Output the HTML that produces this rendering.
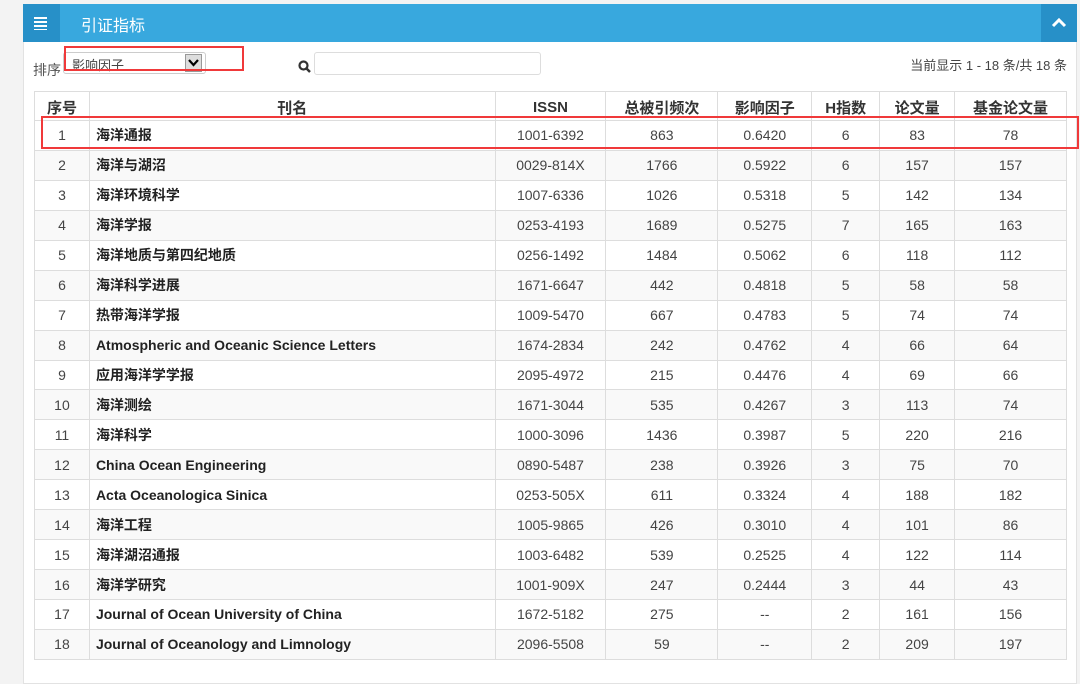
<!DOCTYPE html>
<html><head><meta charset="utf-8"><style>
*{margin:0;padding:0;box-sizing:border-box}
body{width:1080px;height:669px;background:#f3f3f3;font-family:"Liberation Sans","Noto Sans CJK SC",sans-serif;position:relative;overflow:hidden;color:#333}
.panel{position:absolute;left:23px;top:4px;width:1054px;height:680px;background:#fff;border:1px solid #e2e2e2}
.hd{position:absolute;left:23px;top:4px;width:1054px;height:38px;background:#38a8de}
.hd .l{position:absolute;left:0;top:0;width:37px;height:38px;background:#2790c8}
.hd .r{position:absolute;right:0;top:0;width:36px;height:38px;background:#2790c8}
.hd .t{position:absolute;left:58px;top:8px;color:#fff;font-size:16px}
.bar{position:absolute;left:11px;height:2px;width:13px;background:#fff}
.sel{position:absolute;left:63px;top:52px;width:143px;height:22px;border:1px solid #ccc;border-radius:3px;font-size:13px;padding:2px 8px;color:#444;background:#fff}
.sel .b{position:absolute;right:3px;top:1px;width:17px;height:18px;background:#ddd;border:1px solid #999}
table{position:absolute;left:34px;top:91px;width:1033px;border-collapse:collapse;font-size:14px}
td,th{border:1px solid #ddd;text-align:center;height:29.95px;padding:0}
th{height:29px;font-weight:bold;font-size:15px;padding-top:2px}
td:nth-child(2){text-align:left;padding-left:6px;font-weight:bold;color:#222}
td{color:#444}
tr:nth-child(odd) td{background:#f9f9f9}
.red{position:absolute;border:2px solid #f0393a}
</style></head><body>
<div class="panel"></div>
<div class="hd"><div class="l"><div class="bar" style="top:13px"></div><div class="bar" style="top:17px"></div><div class="bar" style="top:21px"></div><div class="bar" style="top:25px;height:1px"></div></div>
<div class="t">引证指标</div>
<div class="r"><svg width="36" height="38"><path d="M12 22 L18 16 L24 22" stroke="#fff" stroke-width="3" fill="none"/></svg></div></div>
<div style="position:absolute;left:33px;top:60px;font-size:14px;color:#555">排序</div>
<div class="sel">影响因子<div class="b"><svg width="15" height="16"><path d="M3 5 L7.5 10 L12 5" stroke="#000" stroke-width="2.2" fill="none"/></svg></div></div>
<div class="red" style="left:64px;top:46px;width:180px;height:25px"></div>
<svg style="position:absolute;left:298px;top:60px" width="14" height="14"><circle cx="5.5" cy="5.5" r="4" stroke="#333" stroke-width="2.2" fill="none"/><path d="M8.5 8.5 L12 12" stroke="#333" stroke-width="2.5"/></svg>
<div style="position:absolute;left:314px;top:52px;width:227px;height:23px;border:1px solid #ddd;border-radius:3px"></div>
<div style="position:absolute;right:13px;top:55px;font-size:13px;color:#444">当前显示 1 - 18 条/共 18 条</div>
<table>
<colgroup><col style="width:55px"><col style="width:406px"><col style="width:111px"><col style="width:112px"><col style="width:94px"><col style="width:68px"><col style="width:75px"><col style="width:112px"></colgroup>
<tr><th>序号</th><th>刊名</th><th>ISSN</th><th>总被引频次</th><th>影响因子</th><th>H指数</th><th>论文量</th><th>基金论文量</th></tr>
<tr><td>1</td><td>海洋通报</td><td>1001-6392</td><td>863</td><td>0.6420</td><td>6</td><td>83</td><td>78</td></tr>
<tr><td>2</td><td>海洋与湖沼</td><td>0029-814X</td><td>1766</td><td>0.5922</td><td>6</td><td>157</td><td>157</td></tr>
<tr><td>3</td><td>海洋环境科学</td><td>1007-6336</td><td>1026</td><td>0.5318</td><td>5</td><td>142</td><td>134</td></tr>
<tr><td>4</td><td>海洋学报</td><td>0253-4193</td><td>1689</td><td>0.5275</td><td>7</td><td>165</td><td>163</td></tr>
<tr><td>5</td><td>海洋地质与第四纪地质</td><td>0256-1492</td><td>1484</td><td>0.5062</td><td>6</td><td>118</td><td>112</td></tr>
<tr><td>6</td><td>海洋科学进展</td><td>1671-6647</td><td>442</td><td>0.4818</td><td>5</td><td>58</td><td>58</td></tr>
<tr><td>7</td><td>热带海洋学报</td><td>1009-5470</td><td>667</td><td>0.4783</td><td>5</td><td>74</td><td>74</td></tr>
<tr><td>8</td><td>Atmospheric and Oceanic Science Letters</td><td>1674-2834</td><td>242</td><td>0.4762</td><td>4</td><td>66</td><td>64</td></tr>
<tr><td>9</td><td>应用海洋学学报</td><td>2095-4972</td><td>215</td><td>0.4476</td><td>4</td><td>69</td><td>66</td></tr>
<tr><td>10</td><td>海洋测绘</td><td>1671-3044</td><td>535</td><td>0.4267</td><td>3</td><td>113</td><td>74</td></tr>
<tr><td>11</td><td>海洋科学</td><td>1000-3096</td><td>1436</td><td>0.3987</td><td>5</td><td>220</td><td>216</td></tr>
<tr><td>12</td><td>China Ocean Engineering</td><td>0890-5487</td><td>238</td><td>0.3926</td><td>3</td><td>75</td><td>70</td></tr>
<tr><td>13</td><td>Acta Oceanologica Sinica</td><td>0253-505X</td><td>611</td><td>0.3324</td><td>4</td><td>188</td><td>182</td></tr>
<tr><td>14</td><td>海洋工程</td><td>1005-9865</td><td>426</td><td>0.3010</td><td>4</td><td>101</td><td>86</td></tr>
<tr><td>15</td><td>海洋湖沼通报</td><td>1003-6482</td><td>539</td><td>0.2525</td><td>4</td><td>122</td><td>114</td></tr>
<tr><td>16</td><td>海洋学研究</td><td>1001-909X</td><td>247</td><td>0.2444</td><td>3</td><td>44</td><td>43</td></tr>
<tr><td>17</td><td>Journal of Ocean University of China</td><td>1672-5182</td><td>275</td><td>--</td><td>2</td><td>161</td><td>156</td></tr>
<tr><td>18</td><td>Journal of Oceanology and Limnology</td><td>2096-5508</td><td>59</td><td>--</td><td>2</td><td>209</td><td>197</td></tr>
</table>
<div class="red" style="left:41px;top:116px;width:1038px;height:33px"></div>
</body></html>
